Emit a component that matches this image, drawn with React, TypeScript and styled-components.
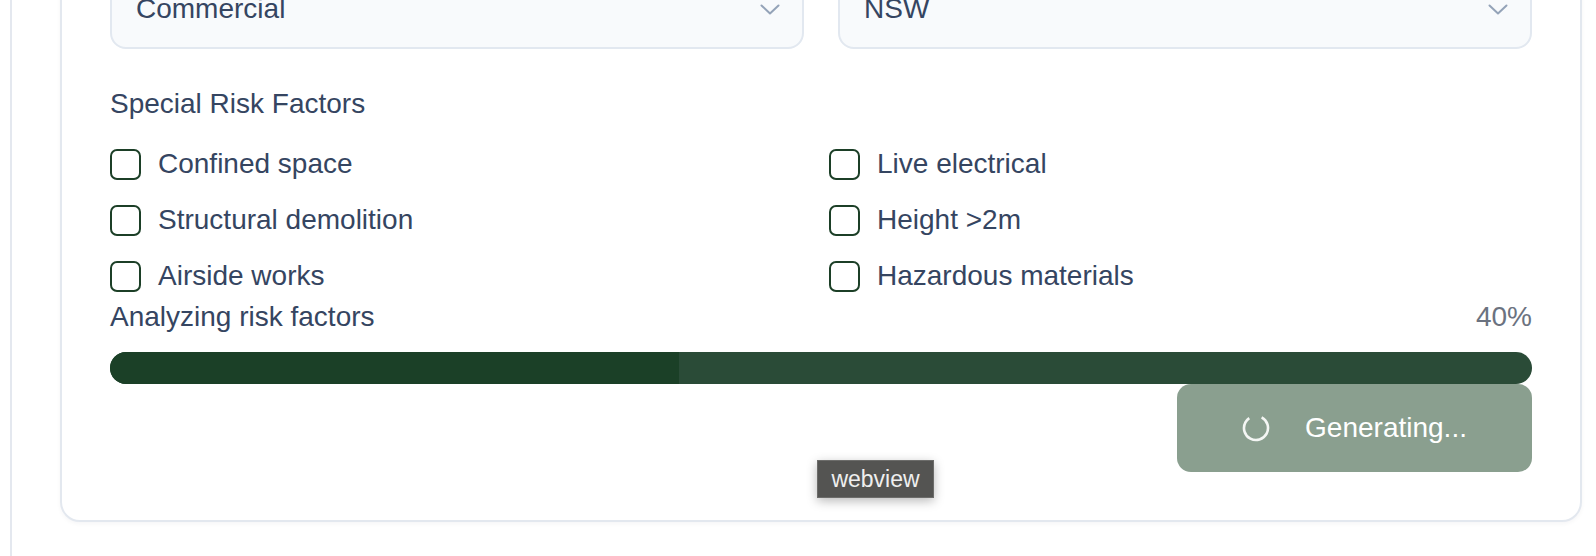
import React from 'react';
import styled, { createGlobalStyle } from 'styled-components';

const GlobalStyle = createGlobalStyle`
	html, body {
		margin: 0;
		padding: 0;
		background: #ffffff;
		overflow: hidden;
	}

	body {
		font-family: 'Liberation Sans', Arial, sans-serif;
		color: #354561;
	}
`;

const Page = styled.div`
	position: relative;
	width: 1596px;
	height: 556px;
	overflow: hidden;
`;

const Frame = styled.div`
	display: flow-root;
	margin-left: 10px;
	height: 100%;
	border-left: 2px solid #e4e8ef;
	padding: 0 14px 0 48px;
	box-sizing: border-box;
`;

const Card = styled.section`
	margin-top: -81px;
	padding: 48px;
	background: #ffffff;
	border: 2px solid #e3e8ef;
	border-radius: 20px;
	box-shadow: 0 2px 4px rgba(15, 23, 42, 0.04);
`;

const FieldRow = styled.div`
	display: grid;
	grid-template-columns: 1fr 1fr;
	gap: 34px;
`;

const Select = styled.div`
	height: 80px;
	padding: 0 22px 0 24px;
	display: flex;
	align-items: center;
	justify-content: space-between;
	box-sizing: border-box;
	background: #f8fafc;
	border: 2px solid #e2e8f0;
	border-radius: 16px;
	font-size: 28px;
	color: #354561;
`;

const SectionLabel = styled.div`
	margin-top: 35px;
	font-size: 28px;
	line-height: 40px;
	color: #354561;
`;

const RiskGrid = styled.div`
	margin-top: 20px;
	display: grid;
	grid-template-columns: 1fr 1fr;
	column-gap: 16px;
	row-gap: 16px;
`;

const CheckRow = styled.label`
	display: flex;
	align-items: center;
	height: 40px;
	font-size: 28px;
	color: #354561;
`;

const Box = styled.span`
	width: 31px;
	height: 31px;
	box-sizing: border-box;
	border: 2px solid #1c3f27;
	border-radius: 7px;
	background: #ffffff;
	margin-right: 17px;
	flex-shrink: 0;
`;

const ProgressHead = styled.div`
	margin-top: 1px;
	display: flex;
	justify-content: space-between;
	font-size: 28px;
	line-height: 40px;
`;

const Percent = styled.span`
	color: #6b7280;
`;

const Track = styled.div`
	margin-top: 15px;
	height: 32px;
	border-radius: 16px;
	background: #2a4b37;
	overflow: hidden;
`;

const Fill = styled.div`
	height: 100%;
	background: #1b4027;
`;

const Actions = styled.div`
	display: flex;
	justify-content: flex-end;
`;

const GenerateButton = styled.button`
	width: 355px;
	height: 88px;
	display: flex;
	align-items: center;
	justify-content: center;
	gap: 35px;
	border: none;
	border-radius: 14px;
	background: #8a9f8f;
	color: #ffffff;
	font-family: 'Liberation Sans', Arial, sans-serif;
	font-size: 28px;
	cursor: not-allowed;
`;

const Tooltip = styled.div`
	position: absolute;
	left: 817px;
	top: 460px;
	width: 117px;
	height: 38px;
	box-sizing: border-box;
	display: flex;
	align-items: center;
	justify-content: center;
	background: #545452;
	border: 1px solid #6c6c6a;
	color: #efefef;
	font-size: 23px;
	box-shadow: 0 3px 10px rgba(0, 0, 0, 0.28);
`;

const Chevron = () => (
	<svg width="20" height="11" viewBox="0 0 20 11" fill="none">
		<polyline points="1.5,1.5 10,9.5 18.5,1.5" stroke="#94a3b8" strokeWidth="2" strokeLinecap="round" strokeLinejoin="round" />
	</svg>
);

const Spinner = () => (
	<svg width="28" height="28" viewBox="0 0 28 28" fill="none">
		<circle
			cx="14"
			cy="14"
			r="12"
			stroke="#f4f6f4"
			strokeWidth="2.6"
			strokeDasharray="62 13.4"
			transform="rotate(-62 14 14)"
		/>
	</svg>
);

const risks = [
	'Confined space',
	'Live electrical',
	'Structural demolition',
	'Height >2m',
	'Airside works',
	'Hazardous materials',
];

const progress = 40;

export default function App() {
	return (
		<Page>
			<GlobalStyle />
			<Frame>
				<Card>
					<FieldRow>
						<Select>
							<span>Commercial</span>
							<Chevron />
						</Select>
						<Select>
							<span>NSW</span>
							<Chevron />
						</Select>
					</FieldRow>

					<SectionLabel>Special Risk Factors</SectionLabel>
					<RiskGrid>
						{risks.map((r) => (
							<CheckRow key={r}>
								<Box />
								{r}
							</CheckRow>
						))}
					</RiskGrid>

					<ProgressHead>
						<span>Analyzing risk factors</span>
						<Percent>{progress}%</Percent>
					</ProgressHead>
					<Track>
						<Fill style={{ width: `${progress}%` }} />
					</Track>

					<Actions>
						<GenerateButton disabled>
							<Spinner />
							Generating...
						</GenerateButton>
					</Actions>
				</Card>
			</Frame>
			<Tooltip>webview</Tooltip>
		</Page>
	);
}
